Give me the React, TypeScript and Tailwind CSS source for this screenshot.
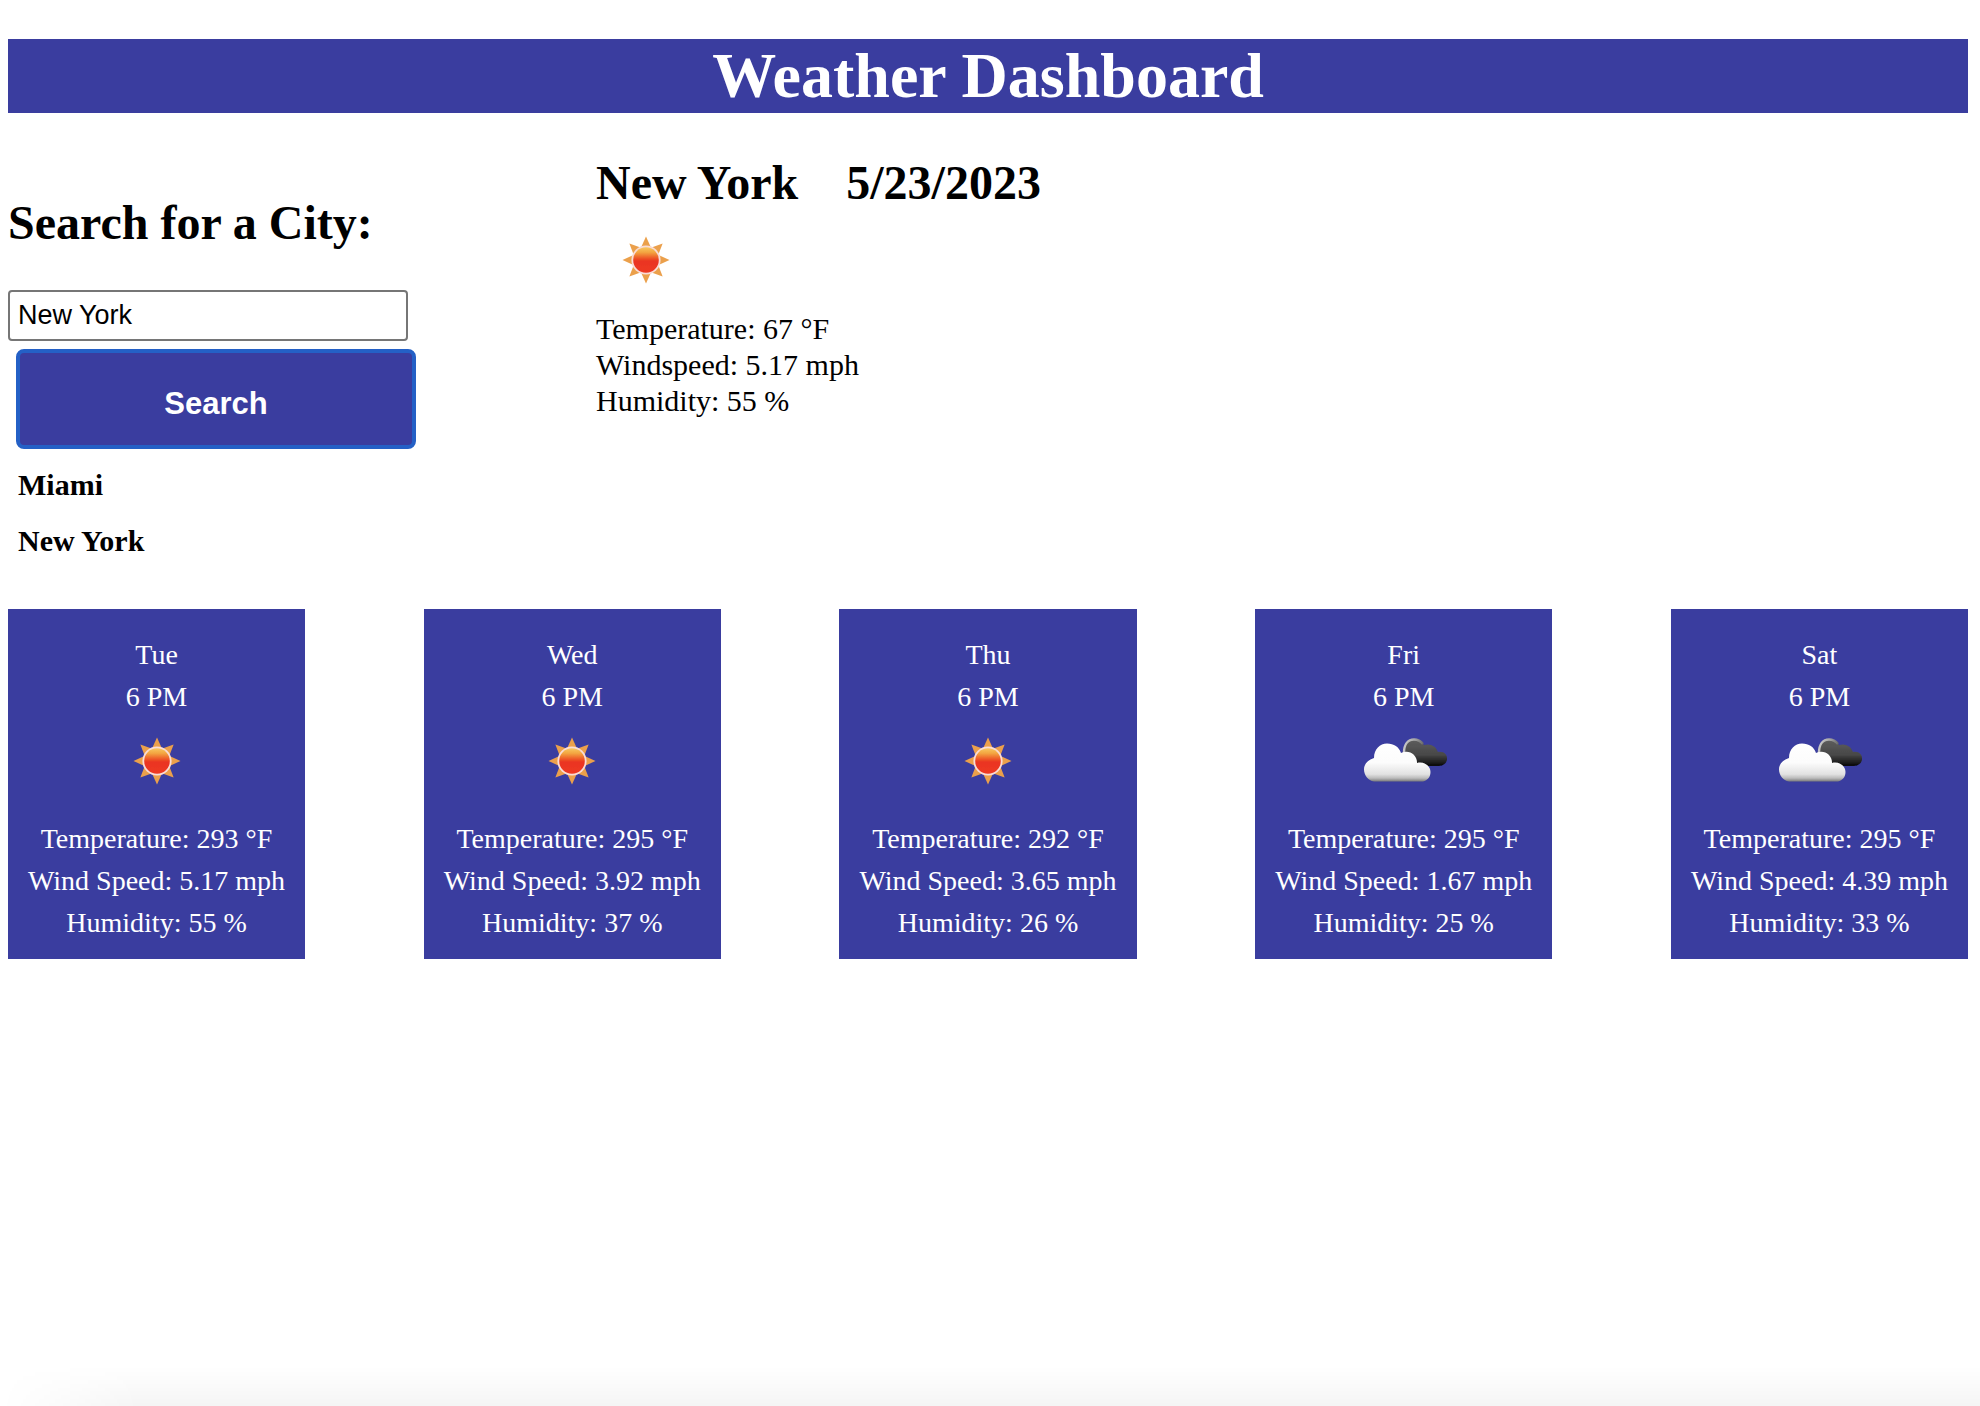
type Sky = "sun" | "clouds";

const forecast: { day: string; temp: number; wind: string; humidity: number; sky: Sky }[] = [
  { day: "Tue", temp: 293, wind: "5.17", humidity: 55, sky: "sun" },
  { day: "Wed", temp: 295, wind: "3.92", humidity: 37, sky: "sun" },
  { day: "Thu", temp: 292, wind: "3.65", humidity: 26, sky: "sun" },
  { day: "Fri", temp: 295, wind: "1.67", humidity: 25, sky: "clouds" },
  { day: "Sat", temp: 295, wind: "4.39", humidity: 33, sky: "clouds" },
];

const cities = ["Miami", "New York"];
const rays = [0, 45, 90, 135, 180, 225, 270, 315];

function SunIcon() {
  return (
    <svg viewBox="0 0 100 100" className="size-25" role="img" aria-label="Clear sky">
      <defs>
        <linearGradient id="sunDisc" x1="0" y1="0" x2="0" y2="1">
          <stop offset="0" stopColor="#f8c862" />
          <stop offset="0.2" stopColor="#f3a540" />
          <stop offset="0.42" stopColor="#ee5a28" />
          <stop offset="0.54" stopColor="#ea3420" />
          <stop offset="1" stopColor="#ee3a24" />
        </linearGradient>
        <filter id="sunSoft">
          <feGaussianBlur stdDeviation="0.6" />
        </filter>
      </defs>
      <g filter="url(#sunSoft)">
        {rays.map((a) => (
          <path key={a} d="M50 26.500 L44.800 38 L55.200 38 Z" fill="#eba04c" transform={`rotate(${a} 50 50)`} />
        ))}
        <circle cx="50" cy="50" r="14.6" fill="#f9dcd6" />
        <circle cx="50" cy="50" r="12.8" fill="url(#sunDisc)" />
      </g>
    </svg>
  );
}

function CloudsIcon() {
  return (
    <svg viewBox="2 0 100 100" className="size-25" role="img" aria-label="Broken clouds">
      <defs>
        <linearGradient id="cloudFront" gradientUnits="userSpaceOnUse" x1="0" y1="32" x2="0" y2="71">
          <stop offset="0" stopColor="#ffffff" />
          <stop offset="0.5" stopColor="#fcfcfc" />
          <stop offset="0.8" stopColor="#e2e2e2" />
          <stop offset="0.9" stopColor="#bcbcbc" />
          <stop offset="1" stopColor="#707070" />
        </linearGradient>
        <linearGradient id="cloudBack" gradientUnits="userSpaceOnUse" x1="0" y1="27" x2="0" y2="55">
          <stop offset="0" stopColor="#606060" />
          <stop offset="0.6" stopColor="#484848" />
          <stop offset="1" stopColor="#080808" />
        </linearGradient>
        <linearGradient id="cloudRim" gradientUnits="userSpaceOnUse" x1="50" y1="30" x2="74" y2="34">
          <stop offset="0" stopColor="#d0d0d0" />
          <stop offset="0.5" stopColor="#a8a8a8" />
          <stop offset="1" stopColor="#555555" />
        </linearGradient>
        <filter id="cloudSoft">
          <feGaussianBlur stdDeviation="0.7" />
        </filter>
      </defs>
      <g filter="url(#cloudSoft)">
        <path
          d="M52 55 C50 48 50 41 52 37 C54 30 59 27.500 63 28 C67 28 70 31 72 34 C78 32 84 35 86 41 C92 40 95.500 44 95 48 C95 52 91 55 87 55 Z"
          fill="url(#cloudBack)"
        />
        <path d="M52 42 C52 33 56 28.500 62 28.500 C66 28.500 69 30.500 71 33" fill="none" stroke="url(#cloudRim)" strokeWidth="2.4" />
        <path
          d="M22 70.500 C16 69.500 12 64 12 58.500 C12 53 16 49 22 47 C22 38 28 32.500 35 32.500 C42 32.500 47 36 49 42 C57 38 65.500 44 65 52 C72 50 78.500 55 78.500 61 C78.500 66 75.500 69.500 71 70.500 Z"
          fill="url(#cloudFront)"
        />
      </g>
    </svg>
  );
}

export default function App() {
  return (
    <div className="min-h-screen bg-white pt-[39px] pr-3 pl-2 font-['Liberation_Serif',serif] text-black">
      <header>
        <h1 className="bg-[#3a3d9f] text-center text-[64px] leading-[74px] font-bold text-white">Weather Dashboard</h1>
      </header>

      <main>
        <div className="flex pb-[50px]">
          <aside className="w-[30%] shrink-0 pt-[82px]">
            <form onSubmit={(e) => e.preventDefault()}>
              <h2 className="text-5xl leading-[55px] font-bold">
                <label htmlFor="city">Search for a City:</label>
              </h2>
              <input
                id="city"
                type="text"
                defaultValue="New York"
                className="mt-10 block h-[51px] w-[400px] rounded border-2 border-[#767676] bg-white px-2 font-['Liberation_Sans',sans-serif] text-[27px] outline-none"
              />
              <button
                type="submit"
                className="mt-2 ml-2 block h-25 w-[400px] rounded-lg border-4 border-[#2460c6] bg-[#3a3d9f] pt-[10px] text-center font-['Liberation_Sans',sans-serif] text-[31px] font-bold text-white"
              >
                Search
              </button>
            </form>
            <ul className="mt-[18px] ml-[10px] flex flex-col gap-5 text-[30px] leading-9 font-bold">
              {cities.map((city) => (
                <li key={city}>{city}</li>
              ))}
            </ul>
          </aside>

          <section className="grow pt-[42px]">
            <h2 className="flex gap-12 text-5xl leading-[55px] font-bold">
              <span>New York</span>
              <span>5/23/2023</span>
            </h2>
            <div className="pb-px">
              <SunIcon />
            </div>
            <div className="text-[30px] leading-9">
              <p>Temperature: 67 °F</p>
              <p>Windspeed: 5.17 mph</p>
              <p>Humidity: 55 %</p>
            </div>
          </section>
        </div>

        <section className="flex justify-between" aria-label="Five day forecast">
          {forecast.map((f) => (
            <article
              key={f.day}
              className="flex flex-col items-center bg-[#3a3d9f] px-5 pt-[25px] pb-[15px] text-[28px] leading-[42px] text-white"
            >
              <p>{f.day}</p>
              <p>6 PM</p>
              <div className="-mt-[7px] mb-[7px]">{f.sky === "sun" ? <SunIcon /> : <CloudsIcon />}</div>
              <p>Temperature: {f.temp} °F</p>
              <p>Wind Speed: {f.wind} mph</p>
              <p>Humidity: {f.humidity} %</p>
            </article>
          ))}
        </section>
      </main>

      <div className="pointer-events-none fixed inset-x-0 bottom-0 h-10 bg-linear-to-t from-black/4 to-transparent mask-l-from-[calc(100%-140px)] mask-l-to-100%" />
    </div>
  );
}
